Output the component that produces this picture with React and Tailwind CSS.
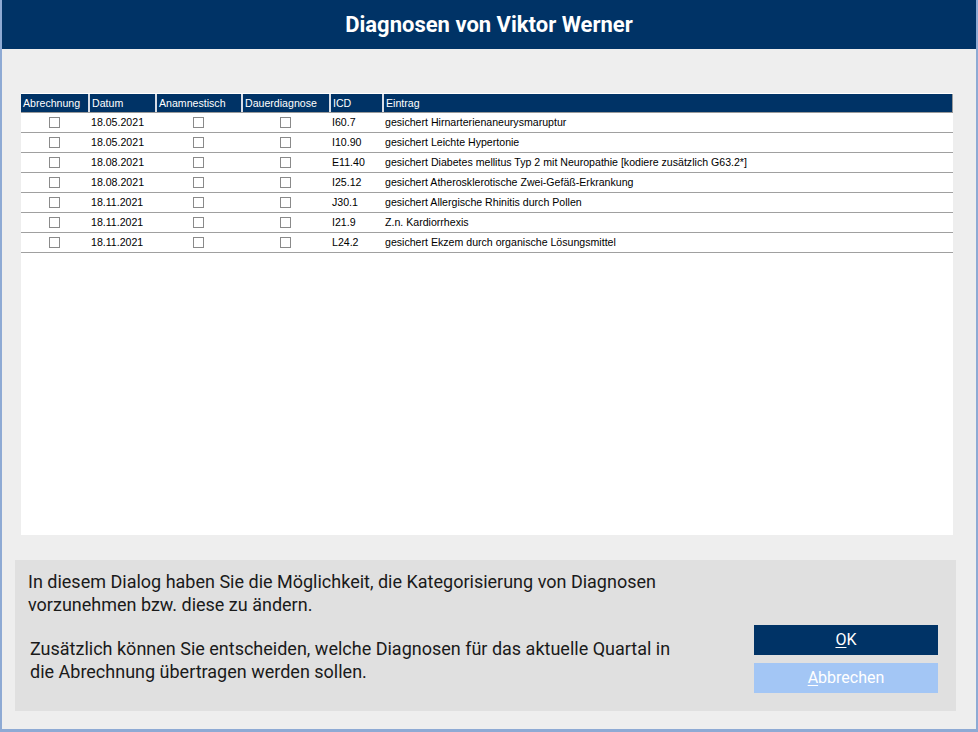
const rows = [
  { datum: "18.05.2021", icd: "I60.7", eintrag: "gesichert Hirnarterienaneurysmaruptur" },
  { datum: "18.05.2021", icd: "I10.90", eintrag: "gesichert Leichte Hypertonie" },
  { datum: "18.08.2021", icd: "E11.40", eintrag: "gesichert Diabetes mellitus Typ 2 mit Neuropathie [kodiere zusätzlich G63.2*]" },
  { datum: "18.08.2021", icd: "I25.12", eintrag: "gesichert Atherosklerotische Zwei-Gefäß-Erkrankung" },
  { datum: "18.11.2021", icd: "J30.1", eintrag: "gesichert Allergische Rhinitis durch Pollen" },
  { datum: "18.11.2021", icd: "I21.9", eintrag: "Z.n. Kardiorrhexis" },
  { datum: "18.11.2021", icd: "L24.2", eintrag: "gesichert Ekzem durch organische Lösungsmittel" },
];

const cols = [
  { label: "Abrechnung", w: "w-[67px]" },
  { label: "Datum", w: "w-[67px]" },
  { label: "Anamnestisch", w: "w-[86px]" },
  { label: "Dauerdiagnose", w: "w-[88px]" },
  { label: "ICD", w: "w-[53px]" },
  { label: "Eintrag", w: "flex-1" },
];

function Box() {
  return <span className="block w-[11px] h-[11px] border border-[#8a8a8a] bg-white" />;
}

function Grid() {
  return (
    <div className="w-[932px] h-[442px] bg-white pt-px text-[10.6px] text-black font-['Liberation_Sans',sans-serif]">
      <div className="flex h-[19px] bg-[#003366] text-white border-r border-b border-[#9a9a9a]">
        {cols.map((c) => (
          <div key={c.label} className={`${c.w} border-l-2 border-[#d8dde6] pl-[2px] leading-[18px] first:border-l-0`}>
            {c.label}
          </div>
        ))}
      </div>
      {rows.map((r, i) => (
        <div key={i} className="flex h-[20px] items-center border-b border-[#a0a0a0]">
          <div className="w-[67px] flex justify-center"><Box /></div>
          <div className="w-[67px] pl-[3px]">{r.datum}</div>
          <div className="w-[86px] flex justify-center"><Box /></div>
          <div className="w-[88px] flex justify-center"><Box /></div>
          <div className="w-[53px] pl-[3px]">{r.icd}</div>
          <div className="flex-1 pl-[3px]">{r.eintrag}</div>
        </div>
      ))}
    </div>
  );
}

export default function App() {
  return (
    <div className="w-[978px] h-[732px] border-2 border-b-[3px] border-t-0 border-[#8eaad4] bg-[#eeeeee] flex flex-col font-['Roboto',sans-serif]">
      <div className="h-[49px] bg-[#003366] flex items-center justify-center text-white text-[22px] font-bold">
        Diagnosen von Viktor Werner
      </div>
      <div className="pl-[19px] mt-[44px]">
        <Grid />
      </div>
      <div className="ml-[13px] mt-[25px] w-[941px] h-[151px] bg-[#e0e0e0] flex justify-between">
        <div className="pl-[13px] pt-[10px] text-[18px] leading-[23px] text-[#1a1a1a]">
          <p>In diesem Dialog haben Sie die Möglichkeit, die Kategorisierung von Diagnosen<br />vorzunehmen bzw. diese zu ändern.</p>
          <p className="mt-[21px] pl-[2px]">Zusätzlich können Sie entscheiden, welche Diagnosen für das aktuelle Quartal in<br />die Abrechnung übertragen werden sollen.</p>
        </div>
        <div className="flex flex-col justify-end gap-[8px] pr-[18px] pb-[18px]">
          <button className="w-[184px] h-[30px] bg-[#003366] text-white text-[16px]">
            <span className="underline underline-offset-2">O</span>K
          </button>
          <button className="w-[184px] h-[30px] bg-[#a3c6f5] text-white text-[16px]">
            <span className="underline underline-offset-2">A</span>bbrechen
          </button>
        </div>
      </div>
    </div>
  );
}
